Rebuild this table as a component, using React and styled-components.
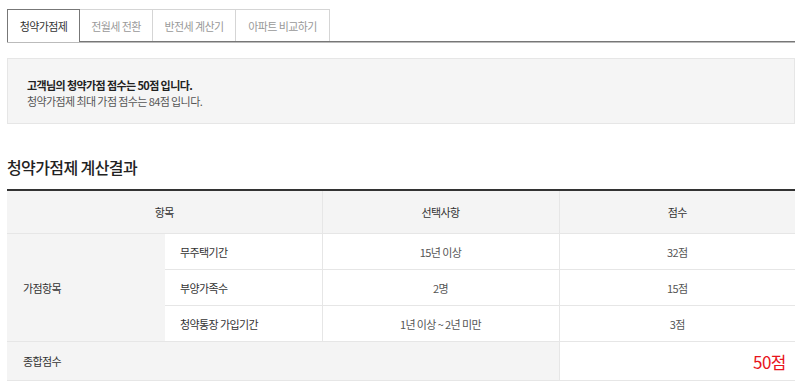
import styled, { createGlobalStyle } from "styled-components";

const GlobalStyle = createGlobalStyle`
  body {
    margin: 0;
    background: #ffffff;
    font-family: "Noto Sans CJK KR", "Noto Sans", sans-serif;
    color: #555;
  }
`;

const Page = styled.div`
  padding: 9px 5px 0 7px;
`;

const Tabs = styled.ul`
  display: flex;
  margin: 0;
  padding: 0;
  list-style: none;
  border-bottom: 1px solid #777;
  box-shadow: 0 1px 0 #bbb;
`;

const Tab = styled.li`
  width: ${(p) => p.w}px;
  box-sizing: border-box;
  display: flex;
  align-items: center;
  justify-content: center;
  font-size: 11px;
  letter-spacing: -0.6px;
  color: ${(p) => (p.active ? "#333" : "#999")};
  border: 1px solid ${(p) => (p.active ? "#777" : "#d5d5d5")};
  border-bottom: none;
  border-left: ${(p) => (p.first ? "" : "none")};
  background: #fff;
  margin-bottom: ${(p) => (p.active ? "-1px" : "0")};
  height: ${(p) => (p.active ? "33px" : "32px")};
  position: relative;
  z-index: ${(p) => (p.active ? 1 : 0)};
`;

const InfoBox = styled.div`
  margin-top: 16px;
  height: 66px;
  box-sizing: border-box;
  padding: 18px 19px 0;
  background: #f5f5f5;
  border: 1px solid #e6e6e6;
  font-size: 11px;
  letter-spacing: -0.6px;
  line-height: 16px;
  color: #555;
  strong {
    color: #222;
    font-weight: 700;
  }
`;

const Title = styled.h2`
  margin: 32px 0 0;
  font-size: 16px;
  font-weight: 500;
  letter-spacing: -0.6px;
  color: #222;
  line-height: 22px;
`;

const Table = styled.table`
  margin-top: 11px;
  width: 100%;
  border-collapse: collapse;
  border-top: 2px solid #333;
  font-size: 11px;
  letter-spacing: -0.6px;
  color: #555;
  td,
  th {
    border-bottom: 1px solid #e6e6e6;
    padding: 0;
    height: 35px;
  }
`;

const Th = styled.th`
  height: 42px !important;
  background: #f4f4f4;
  font-weight: 400;
  color: #333;
  text-align: center;
  border-left: ${(p) => (p.first ? "none" : "1px solid #e6e6e6")};
`;

const GroupCell = styled.td`
  background: #f4f4f4;
  padding-left: 16px !important;
  text-align: left;
  color: #333;
`;

const SubCell = styled.td`
  padding-left: 15px !important;
  text-align: left;
  color: #333;
`;

const ValueCell = styled.td`
  text-align: center;
  border-left: 1px solid #e6e6e6;
`;

const TotalRow = styled.tr`
  td {
    height: 38px;
  }
`;

const TotalLabel = styled.td`
  background: #f4f4f4;
  padding-left: 16px !important;
  color: #333;
`;

const TotalScore = styled.td`
  text-align: right;
  padding-right: 9px !important;
  font-size: 17px;
  letter-spacing: -0.5px;
  color: #e8141c;
  border-left: 1px solid #e6e6e6;
`;

const rows = [
  { label: "무주택기간", choice: "15년 이상", score: "32점" },
  { label: "부양가족수", choice: "2명", score: "15점" },
  { label: "청약통장 가입기간", choice: "1년 이상 ~ 2년 미만", score: "3점" },
];

const tabs = [
  { name: "청약가점제", w: 73 },
  { name: "전월세 전환", w: 73 },
  { name: "반전세 계산기", w: 83 },
  { name: "아파트 비교하기", w: 94 },
];

export default function App() {
  return (
    <Page>
      <GlobalStyle />
      <Tabs>
        {tabs.map((t, i) => (
          <Tab key={t.name} w={t.w} active={i === 0} first={i === 0}>
            {t.name}
          </Tab>
        ))}
      </Tabs>
      <InfoBox>
        <strong>고객님의 청약가점 점수는 50점 입니다.</strong>
        <br />
        청약가점제 최대 가점 점수는 84점 입니다.
      </InfoBox>
      <Title>청약가점제 계산결과</Title>
      <Table>
        <colgroup>
          <col style={{ width: 158 }} />
          <col style={{ width: 157 }} />
          <col style={{ width: 237 }} />
          <col />
        </colgroup>
        <thead>
          <tr>
            <Th first colSpan={2}>
              항목
            </Th>
            <Th>선택사항</Th>
            <Th>점수</Th>
          </tr>
        </thead>
        <tbody>
          {rows.map((r, i) => (
            <tr key={r.label}>
              {i === 0 && <GroupCell rowSpan={3}>가점항목</GroupCell>}
              <SubCell>{r.label}</SubCell>
              <ValueCell>{r.choice}</ValueCell>
              <ValueCell>{r.score}</ValueCell>
            </tr>
          ))}
          <TotalRow>
            <TotalLabel colSpan={3}>종합점수</TotalLabel>
            <TotalScore>50점</TotalScore>
          </TotalRow>
        </tbody>
      </Table>
    </Page>
  );
}
